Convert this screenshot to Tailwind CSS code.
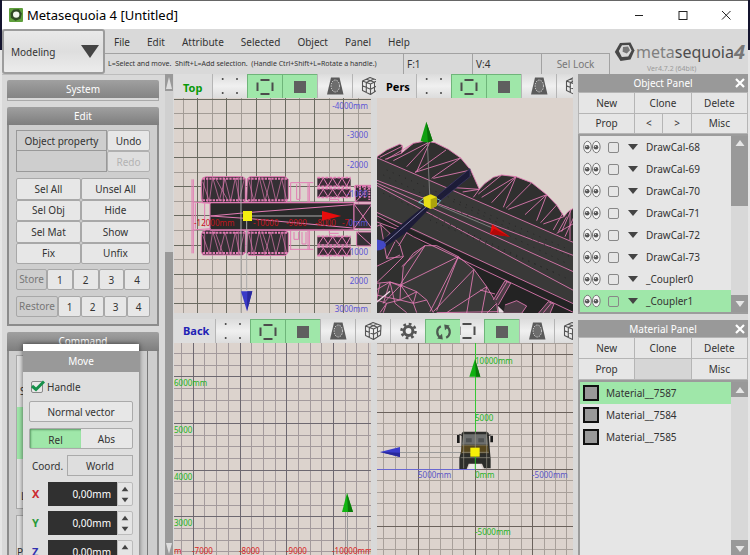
<!DOCTYPE html>
<html lang="en">
<head>
<meta charset="utf-8">
<title>Metasequoia 4 [Untitled]</title>
<script src="https://cdn.jsdelivr.net/npm/@tailwindcss/browser@4"></script>
</head>
<body class="h-screen overflow-hidden bg-[#d9d9d9] font-['Noto_Sans','Open_Sans',sans-serif] text-[10px] leading-[14px] text-[#333]">

<svg class="hidden" aria-hidden="true">
  <symbol id="i-dots" viewBox="0 0 35 24"><g fill="#444"><circle cx="9.7" cy="5" r="1"/><circle cx="24" cy="5" r="1"/><circle cx="9.7" cy="19" r="1"/><circle cx="24" cy="19" r="1"/></g></symbol>
  <symbol id="i-edges" viewBox="0 0 35 24"><path d="M12.5 5H21.5M12.5 19H21.5M9.5 7.5V16M24.5 7.5V16" stroke="#4c4c4c" stroke-width="2" fill="none"/></symbol>
  <symbol id="i-face" viewBox="0 0 35 24"><rect x="11" y="6" width="12" height="12" fill="#5f5f5f"/></symbol>
  <symbol id="i-trap" viewBox="0 0 35 24"><path d="M13 3.5H21.5L25.5 20.5H9Z" fill="#5b5b5b"/><ellipse cx="17.3" cy="12" rx="4.2" ry="6" fill="#6d6d6d" stroke="#e4e4e4" stroke-width="1" stroke-dasharray="1.3 1.2"/></symbol>
  <symbol id="i-cube" viewBox="0 0 35 24"><path d="M9.5 7L17 3.5L25 6.5L24.5 16L17.5 20.5L9.5 16.5ZM9.5 7L17.5 10L25 6.5M17.5 10V20.5M13.5 5.2L21.5 8.3V18M9.5 11.7L17.5 15.2L25 11.2M21 5L13.3 8.5V18.5" stroke="#555" stroke-width="1.1" fill="none" stroke-linejoin="round"/></symbol>
  <symbol id="i-gear" viewBox="0 0 35 24"><circle cx="17.5" cy="12" r="4.4" fill="none" stroke="#555" stroke-width="3"/><circle cx="17.5" cy="12" r="7" fill="none" stroke="#555" stroke-width="2.6" stroke-dasharray="2.75 2.75"/></symbol>
  <symbol id="i-turn" viewBox="0 0 35 24"><path d="M14.8 6.3A6.3 6.3 0 0 0 14.5 17.5M20.2 17.7A6.3 6.3 0 0 0 20.5 6.5" stroke="#4c5a50" stroke-width="2.2" fill="none"/><path d="M11.2 18.6L16.8 19.4L16 13.8ZM23.8 5.4L18.2 4.6L19 10.2Z" fill="#4c5a50"/></symbol>
  <symbol id="i-eyes" viewBox="0 0 18 14"><g fill="#f5f5f5" stroke="#777" stroke-width="1"><ellipse cx="4.5" cy="7" rx="3.8" ry="5.7"/><ellipse cx="13.3" cy="7" rx="3.8" ry="5.7"/></g><circle cx="4.2" cy="7.3" r="2.3" fill="#555"/><circle cx="13" cy="7.3" r="2.3" fill="#555"/><circle cx="3.7" cy="6.4" r=".7" fill="#ddd"/><circle cx="12.5" cy="6.4" r=".7" fill="#ddd"/></symbol>
  <symbol id="i-x" viewBox="0 0 12 12"><path d="M2 2L10 10M10 2L2 10" stroke="#fff" stroke-width="2.2"/></symbol>
  <symbol id="i-up" viewBox="0 0 10 8"><path d="M5 1L9.5 7H.5Z" fill="currentColor"/></symbol>
  <symbol id="i-down" viewBox="0 0 10 8"><path d="M5 7L9.5 1H.5Z" fill="currentColor"/></symbol>
</svg>

<div class="flex h-full bg-linear-to-b from-[#14142e] from-9% to-[#e6e6e6] to-9% px-[2px]">
<div class="flex min-w-0 flex-1 flex-col bg-[#d9d9d9]">

  <!-- Title bar -->
  <header class="flex h-[29px] shrink-0 items-center border-t border-[#666] bg-white pl-[7px] text-black">
    <svg class="mr-1 size-[14px]" viewBox="0 0 14 14"><rect width="14" height="14" rx="1" fill="#5f9f3c"/><path d="M4.5 1.5L10 1.3L12.8 5.5L11.5 10.8L6.5 12.8L1.8 9.8L1.5 5Z" fill="#2e4a24"/><circle cx="7.2" cy="6.6" r="3.2" fill="#f1f6ee"/></svg>
    <h1 class="flex-1 text-[13px] leading-[18px]">Metasequoia 4 [Untitled]</h1>
    <button class="flex w-[44px] justify-center" aria-label="Minimize"><svg class="size-[10px]" viewBox="0 0 10 10"><path d="M1 5.5H9" stroke="#222"/></svg></button>
    <button class="flex w-[43px] justify-center" aria-label="Maximize"><svg class="size-[10px]" viewBox="0 0 10 10"><rect x="1" y="1.5" width="8" height="8" fill="none" stroke="#222"/></svg></button>
    <button class="flex w-[44px] justify-center" aria-label="Close"><svg class="size-[10px]" viewBox="0 0 10 10"><path d="M1 1L9.5 9.5M9.5 1L1 9.5" stroke="#222"/></svg></button>
  </header>

  <!-- Menu and status -->
  <div class="flex h-[45px] shrink-0">
    <div class="relative w-[103px]">
      <select aria-label="Mode" class="h-full w-full appearance-none rounded-[3px] border-2 border-[#9c9c9c] bg-linear-to-b from-[#e9e9e9] via-[#dedede] to-[#ececec] pl-[7px] text-[10px]"><option>Modeling</option></select>
      <svg class="pointer-events-none absolute top-[16px] right-[6px] h-[13px] w-[18px]" viewBox="0 0 18 13"><path d="M0 0H18L9 13Z" fill="#444"/></svg>
    </div>
    <div class="flex min-w-0 flex-1 flex-col">
      <nav class="flex h-[24px] items-center gap-[17px] pt-px pl-[9px] text-[10px]">
        <a href="#">File</a><a href="#">Edit</a><a href="#">Attribute</a><a href="#">Selected</a><a href="#">Object</a><a href="#">Panel</a><a href="#">Help</a>
      </nav>
      <div class="flex flex-1 items-stretch border-t border-[#a2a2a2]">
        <p class="flex flex-1 items-center overflow-hidden pl-[3px] text-[7px] whitespace-pre">L=Select and move.  Shift+L=Add selection.  (Handle Ctrl+Shift+L=Rotate a handle.)</p>
        <p class="flex w-[69px] items-center border-l border-[#a2a2a2] pl-[3px]">F:1</p>
        <p class="flex w-[69px] items-center border-l border-[#a2a2a2] pl-[3px]">V:4</p>
        <button class="w-[69px] border-x border-[#a2a2a2] text-[#777]">Sel Lock</button>
      </div>
    </div>
    <div class="w-[138px] pt-[11px]">
      <div class="flex h-[23px] items-center pl-[4px]">
        <svg class="size-[21px] shrink-0" viewBox="0 0 21 21"><path d="M6 2L16.5 1.5L20.5 9.5L16.5 18.5L6.5 20L.8 11Z" fill="#484848"/><path d="M8 4.3L14.8 4L17.6 9.5L14.2 15.5L7.8 16L4.8 10Z" fill="#d9d9d9"/><path d="M9 6L14 5.6L16 9.2L12.8 12.6L8.6 10.8Z" fill="#777"/></svg>
        <p class="ml-px text-[16px] leading-[20px] text-[#4d4d4d]"><span class="text-[#808080]">meta</span>sequoia</p>
        <span class="text-[20px] leading-[20px] font-bold text-[#777] italic">4</span>
      </div>
      <p class="pl-[37px] text-[7px] leading-[12px] text-[#999]">Ver4.7.2 (64bit)</p>
    </div>
  </div>

  <main class="flex min-h-0 flex-1">

    <!-- Tool column -->
    <aside class="relative w-[163px] shrink-0 overflow-hidden border-t border-[#bdbdbd] pr-[6px] pl-[5px]">
      <h2 class="mt-[5px] h-[18px] rounded-t-[2px] bg-linear-to-b from-[#a0a0a0] to-[#848484] text-center leading-[18px] text-white">System</h2>
      <div class="h-[3px] border-x border-b border-[#aaa]"></div>
      <section class="mt-[6px]">
        <h2 class="h-[18px] rounded-t-[2px] bg-linear-to-b from-[#a0a0a0] to-[#7e7e7e] text-center leading-[18px] text-white">Edit</h2>
        <div class="h-[201px] border-2 border-t-0 border-[#8c8c8c] bg-[#cecece] px-[7px] pt-[5px]">
          <div class="grid h-[42px] grid-cols-[91px_1fr] grid-rows-2">
            <button class="border border-[#999]">Object property</button>
            <button class="rounded-[2px] border border-[#b0b0b0] bg-[#e7e7e7]">Undo</button>
            <div class="border border-t-0 border-[#999]"></div>
            <button class="rounded-[2px] border border-[#b0b0b0] bg-[#dfdfdf] text-[#b3b3b3]" disabled>Redo</button>
          </div>
          <div class="mt-[6px] grid h-[86px] grid-cols-[65px_1fr] grid-rows-4 *:rounded-[2px] *:border *:border-[#a8a8a8] *:bg-[#e7e7e7]">
            <button>Sel All</button><button>Unsel All</button>
            <button>Sel Obj</button><button>Hide</button>
            <button>Sel Mat</button><button>Show</button>
            <button>Fix</button><button>Unfix</button>
          </div>
          <div class="mt-[5px] grid h-[21px] grid-cols-[31px_repeat(4,1fr)] *:rounded-[2px] *:border *:border-[#a8a8a8]">
            <span class="text-center leading-[19px] text-[#777]">Store</span><button class="bg-[#e7e7e7]">1</button><button class="bg-[#e7e7e7]">2</button><button class="bg-[#e7e7e7]">3</button><button class="bg-[#e7e7e7]">4</button>
          </div>
          <div class="mt-[6px] grid h-[21px] grid-cols-[42px_repeat(4,1fr)] *:rounded-[2px] *:border *:border-[#a8a8a8]">
            <span class="text-center leading-[19px] text-[#777]">Restore</span><button class="bg-[#e7e7e7]">1</button><button class="bg-[#e7e7e7]">2</button><button class="bg-[#e7e7e7]">3</button><button class="bg-[#e7e7e7]">4</button>
          </div>
        </div>
      </section>
      <section class="mt-[6px]">
        <h2 class="h-[19px] rounded-t-[2px] bg-linear-to-b from-[#a0a0a0] to-[#7e7e7e] text-center leading-[19px] text-white">Command</h2>
        <div class="relative border-x-2 border-[#8c8c8c] bg-[#cecece] pt-[4px] pl-[7px]">
          <div class="h-[154px] w-[120px] border border-[#aaa] bg-[#e2e2e2]">
            <p class="mt-[28px] h-[23px] pl-[3px]">S</p>
            <p class="h-[52px] bg-[#9fe7a9]"></p>
            <p class="mt-[30px] pl-[4px]">L</p>
          </div>
          <div class="mt-[6px] h-[60px] w-[120px] border border-[#aaa] bg-[#e2e2e2]"><p class="mt-[29px]">Pr</p></div>
          <div class="absolute inset-y-0 right-[9px] w-px bg-[#777]"></div>
        </div>
      </section>

      <!-- Floating "Move" palette -->
      <form class="absolute top-[269px] left-[21px] w-[116px] border-t-[7px] border-white bg-[#dedede] shadow-[0_0_5px_rgba(0,0,0,.6)]">
        <h2 class="h-[21px] bg-[#999] text-center leading-[21px] text-white">Move</h2>
        <div class="px-[6px] pt-[8px]">
          <div class="relative flex h-[14px] items-center gap-[4px] pl-[2px]">
            <input id="handle" type="checkbox" checked class="size-[12px] appearance-none rounded-[2px] border border-[#888] bg-[#e8e8e8]">
            <svg class="pointer-events-none absolute top-0 left-[2px] h-[12px] w-[14px]" viewBox="0 0 14 12"><path d="M1 6L5 9.5L13 1.5" fill="none" stroke="#16904a" stroke-width="3"/></svg>
            <label for="handle">Handle</label>
          </div>
          <button type="button" class="mt-[7px] h-[21px] w-full rounded-[2px] border border-[#aaa] bg-[#e7e7e7]">Normal vector</button>
          <div class="mt-[6px] flex h-[21px] rounded-[2px] border border-[#aaa] bg-[#e7e7e7]">
            <button type="button" aria-pressed="true" class="flex-1 bg-[#9fe7a9] pt-[3px] shadow-[inset_1px_1px_2px_#5c9c66]">Rel</button><button type="button" class="flex-1">Abs</button>
          </div>
          <div class="mt-[6px] flex h-[21px] items-center justify-between pl-[3px]"><span>Coord.</span><button type="button" class="h-full w-[66px] border border-[#aaa]">World</button></div>
          <div id="axes" class="mt-[6px] flex flex-col gap-[5px]"></div>
        </div>
      </form>
    </aside>

    <div class="flex w-[8px] shrink-0 flex-col justify-between bg-linear-to-b from-[#d0d0d0] from-37% to-[#999] to-37%">
      <div class="flex h-[17px] items-center justify-center bg-[#999]"><svg class="h-[12px] w-[6px]" viewBox="0 0 6 12"><path d="M3 0L6 12H0Z" fill="#ddd"/></svg></div>
      <svg class="mx-px mb-[1px] h-[11px] w-[6px]" viewBox="0 0 6 11"><path d="M0 0H6L3 11Z" fill="#ddd"/></svg>
    </div>

    <!-- Viewports -->
    <section class="ml-px grid min-w-0 flex-1 grid-cols-[minmax(0,203fr)_minmax(0,201fr)] grid-rows-[24px_minmax(0,215fr)_30px_minmax(0,212fr)] overflow-hidden">
      <div class="flex overflow-hidden bg-[#dedede] pr-px">
        <h3 class="w-[38px] shrink-0 pl-[9px] text-[11px] leading-[27px] font-bold text-[#0a9a0a]">Top</h3>
        <div data-tools="dots edges face trap cube" class="flex overflow-hidden"></div>
      </div>
      <div class="mr-[5px] flex overflow-hidden bg-[#dedede]">
        <h3 class="w-[39px] shrink-0 pl-[9px] text-[11px] leading-[26px] font-bold text-black">Pers</h3>
        <div data-tools="dots edges face trap cube" class="flex overflow-hidden"></div>
      </div>

      <svg class="h-full w-[calc(100%-6px)] bg-[#dcd3cd]" viewBox="0 0 197 215" preserveAspectRatio="xMinYMin slice" aria-label="Top view">
        <g data-grid="-5.6 1.1 29.2 2 #a39c96 #6a6a60"></g>
        <g transform="translate(-4 -28) scale(.33333)" stroke="#e27bb4" stroke-width="3" stroke-linejoin="round">
          <g fill="#343034">
            <path d="M98 324L108 320H218L226 326V394L218 398H98L94 385V335ZM232 326L240 320H345L355 328V385L348 397H236L230 388ZM98 484L108 480H218L226 486V548L218 555H98L94 545V495ZM232 486L240 480H345L355 488V545L348 556H236L230 548Z"/>
            <path d="M120 398H552V480H120Z" fill="#292929"/>
            <path d="M552 402H606V476H552ZM556 346H606V396H556ZM560 486H606V528H560Z"/>
          </g>
          <path d="M66 328V550M70 328V550M68 396L122 400M68 480L122 476M76 400V476M104 400V470M362 338H430M362 538H430M362 338V396M362 482V540M414 340V396M414 482V538M418 340V396M418 482V538M380 342V388H390V342M372 486V508H386V486M396 486V522H408V486M478 388H506V398M478 480V490H506M552 402L606 476M552 476L606 402M560 486L606 528M556 396L606 346" fill="none"/>
          <path d="M98 335L118 394L128 322L148 392L165 326L182 394L196 324L208 390L222 330M104 322L98 390M112 322V396M135 322L175 394M160 322V396M205 322V396M236 330L252 394L268 322L285 394L302 324L318 394L335 326L350 390M244 322V396M276 322L300 396M345 322V396M98 495L118 552L128 484L148 552L165 486L182 554L196 486L208 550L222 490M104 484V552M135 484L160 554M205 484V554M236 490L252 554L268 484L285 554L302 486L318 554L335 486L350 548M244 484V554M276 484L300 554M345 484V554" fill="none" stroke-width="2"/>
          <path d="M98 326H224M234 326H352M98 391H224M234 391H352M98 488H224M234 488H352M98 549H224M234 549H352" stroke-width="6" stroke-dasharray="7 3" fill="none"/>
          <path d="M442 336H542M442 369H542M442 512H542M442 544H542" stroke="#3a2c36" stroke-width="24"/>
          <path d="M442 323H542M442 349H542M442 356H542M442 382H542M442 499H542M442 525H542M442 531H542M442 557H542" stroke-width="5" stroke-dasharray="9 3"/>
          <path d="M446 348L460 324L474 348L488 324L502 348L516 324L530 348L542 324M446 380L460 358L474 380L488 358L502 380L516 358L530 380L542 358M446 522L460 500L474 522L488 500L502 522L516 500L530 522L542 500M446 556L460 534L474 556L488 534L502 556L516 534L530 556L542 534" fill="none" stroke-width="3"/>
          <path d="M552 350H606M570 346V384M584 346V384M598 346V390" stroke-width="6" stroke-dasharray="5 3"/>
          <path d="M122 438L230 428L548 404M122 438L240 446L548 474M122 398H552M122 480H552" fill="none"/>
          <path d="M230 438V660M213 320V728M230 438H460" stroke="#aaa"/>
          <path d="M456 423L514 438L456 452Z" fill="#e80c0c" stroke="none"/><path d="M213 664H247L231 724Z" fill="#3a3ac8" stroke="none"/><path d="M232 664H247L231 724Z" fill="#29299c" stroke="none"/>
        </g>
        <g font-size="8" fill="#5b55d6" text-anchor="end"><text x="194" y="11">-4000mm</text><text x="194" y="40">-3000</text><text x="194" y="70">-2000</text><text x="194" y="99">-1000</text><text x="194" y="128">0mm</text><text x="194" y="157">1000</text><text x="194" y="186">2000</text><text x="194" y="214">3000mm</text></g>
        <g font-size="8" fill="#c3141c"><text x="20" y="128">-12000mm</text><text x="79" y="128">-10000</text><text x="112" y="128">-9000</text><text x="141" y="128">-8000</text><text x="168" y="128">-7</text></g>
        <rect x="69" y="113" width="9" height="10" fill="#f4ee10"/>
      </svg>

      <svg class="h-full w-[calc(100%-5px)] bg-[#dcd3cd]" viewBox="0 0 196 215" preserveAspectRatio="xMinYMin slice" aria-label="Perspective view">
        <g transform="translate(-7 -28) scale(.33333)" stroke="#e27bb4" stroke-width="2.6" stroke-linejoin="round">
          <path d="M18 262L50 240L90 222L98 228L94 250L130 220L165 213L195 218L235 238L272 264L302 300L328 358L345 340L370 322L395 315L438 320L485 338L530 374L560 405L582 440L594 425L612 414V732H18Z" fill="#30302f"/>
          <path d="M18 262L612 518V702L18 445Z" fill="#393938" stroke="none"/>
          <path d="M18 432L612 700V732H400L350 650L100 480L60 500Z" fill="#232323" stroke="none"/>
          <path d="M95 650L100 590L130 550L165 527L200 527L265 560L312 598L350 650L380 700L384 732H18V640L60 636Z" fill="#393938"/>
          <path d="M18 470L32 464L60 490L90 525L100 560L60 600L18 640Z" fill="#303030"/>
          <path d="M384 708L405 728H386Z" fill="#e8d8e0" stroke="none"/>
          <path d="M18 262L612 518M18 330L612 557M18 338L612 606M18 345L612 662M18 426L612 702M18 436L100 478M18 455L110 488L86 528M110 488L130 500L612 728" fill="none"/>
          <path d="M180 215L70 272M180 215L110 290M180 215L140 305M228 240L135 307M272 264L135 307M272 264L185 325M302 300L190 325M302 315L240 345M328 358L240 352M328 358L278 366M328 358L310 382M130 220L50 268M94 250L45 268M98 228L30 262" fill="none"/>
          <path d="M438 320L335 382M438 320L365 398M438 320L400 412M485 338L408 415M530 374L415 418M530 374L465 434M530 374L500 452M560 405L512 458M582 440L520 462M578 430L550 480M395 315L325 372M590 440L565 485M604 418L575 485M612 440L585 500M600 425L600 510M612 460L560 490" fill="none"/>
          <path d="M165 527L90 645M165 527L95 590M265 560L92 645M265 560L180 725M265 560L200 722M312 598L190 725M312 598L290 730M350 650L230 728M350 650L335 730M380 700L350 730M384 725L200 728M32 464L50 565M75 515L50 565M100 560L50 565M60 490L18 540M18 590L90 555" fill="none"/>
          <path d="M18 660L60 636L92 645L140 665L170 690L190 728M40 728L50 700L90 690L130 700L140 728M60 636L40 700L92 645L90 690L140 665L130 700L170 690M20 690L50 700L30 728M18 675L90 690M60 636L75 700L110 728M30 640L20 690M92 645L130 700" fill="none"/>
          <path d="M370 690L405 632L422 640L385 705M378 690L412 634M405 705L440 692L470 708L455 730H400M505 730L535 695L552 702L540 730M520 728L545 698M330 660L375 672" fill="#4a3c44"/>
          <path d="M300 296V320L205 397L198 380L240 345Z" fill="#1d1c38" stroke="#3a3560"/>
          <path d="M172 400L38 510L46 530L108 488L182 412Z" fill="#1d1c38" stroke="none"/><path d="M45 520L178 402" stroke="#8a88b0"/>
          <path d="M18 698L60 664" stroke="#f2d5e4" stroke-width="4"/>
          <g fill="none" stroke="#252525" stroke-width="3" stroke-dasharray="3 17"><path d="M50 300L600 540M40 370L600 630M180 450L560 610M40 315L590 580M250 395L600 560"/></g>
          <path d="M172 215L180 395L370 475" stroke="#888" fill="none"/>
          <path d="M146 397L165 383H195L212 392L200 405H165Z" fill="none" stroke="#7fd3cf"/>
          <path d="M169 155L188 212Q170 222 152 212Z" fill="#0f9f0f" stroke="none"/><path d="M169 155L188 212L174 218Z" fill="#087008" stroke="none"/>
          <path d="M366 463L420 500L360 492Z" fill="#e60e0e" stroke="none"/><path d="M360 492L420 500L372 476Z" fill="#b50808" stroke="none"/>
          <path d="M18 508Q45 510 48 525Q46 540 18 542Z" fill="#4348c6" stroke="none"/>
          <path d="M160 382L182 373L201 381V407L182 417L162 408Z" fill="#e8df17" stroke="none"/><path d="M182 388L201 381V407L182 417Z" fill="#aca30d" stroke="none"/>
        </g>
      </svg>

      <div class="relative z-10 flex items-end self-end">
        <h3 class="w-[41px] shrink-0 bg-[#dedede] pl-[9px] text-[11px] leading-[24px] font-bold text-[#2222b5]">Back</h3>
        <div data-tools="dots edges face trap cube gear turn" class="flex shrink-0"></div>
      </div>
      <div class="mr-[5px] flex self-end overflow-hidden pl-[72px]">
        <div data-tools="edges face trap cube" class="flex overflow-hidden"></div>
      </div>

      <svg class="h-full w-[calc(100%-6px)] bg-[#dcd3cd]" viewBox="0 0 197 212" preserveAspectRatio="xMinYMin slice" aria-label="Back view">
        <g data-grid="-27.4 -13 46.7 4 #a39a9c #6d6870"></g>
        <path d="M173.5 165V212" stroke="#999"/><path d="M173 150L179 169H168Z" fill="#12b512"/><path d="M173 150L179 169H174Z" fill="#0a7a0a"/>
        <g font-size="8" fill="#1db31d"><text x="0" y="43">6000mm</text><text x="0" y="90">5000</text><text x="0" y="137">4000</text><text x="0" y="183">3000</text></g>
        <g font-size="8" fill="#d81e24"><text x="0" y="211">m</text><text x="18" y="211">-7000</text><text x="65" y="211">-8000</text><text x="112" y="211">-9000</text><text x="158" y="211">-10000mm</text></g>
      </svg>

      <svg class="h-full w-[calc(100%-5px)] bg-[#dcd3cd]" viewBox="0 0 196 212" preserveAspectRatio="xMinYMin slice" aria-label="Front view">
        <g data-grid="-16.3 -45.6 57.3 5 #a8a09a #6b625c"></g>
        <path d="M98.5 0V126" stroke="#35c835"/><path d="M0 126.5H98" stroke="#6a68d0"/>
        <path d="M20 109.5H98" stroke="#999"/>
        <g transform="translate(-7 -28) scale(.33333)">
          <path d="M275 354L280 350H350L356 354L360 410L362 432V460H342L336 446H296L290 462H268V430L274 405Z" fill="#2c2d2a"/>
          <path d="M280 358H350L354 388H276Z" fill="#6d6f6e"/><path d="M276 390H354L357 415H273Z" fill="#57471e"/><path d="M288 370H305V382H288ZM325 370H342V382H325Z" fill="#4f5252"/>
          <path d="M261 360H269V384H261ZM361 362H369V382H361Z" fill="#1b1b1b"/><path d="M268 358L278 362M352 362L362 360" stroke="#222" stroke-width="3"/>
          <path d="M276 390H354M272 428H360M281 350V460M350 350V460M316 350V400M276 412H356" stroke="#98958a" stroke-width="2"/>
          <path d="M294 462L300 447H330L338 462Z" fill="#ece9e6"/><path d="M316 425V463" stroke="#25b825" stroke-width="3"/>
          <path d="M315 132L331 185H298Z" fill="#11b011"/><path d="M315 132L331 185H318Z" fill="#0a780a"/>
          <path d="M30 411L90 396V426Z" fill="#3a3ccb"/><path d="M30 411L90 413V426Z" fill="#28289a"/>
          <path d="M301 398H329V425H301Z" fill="#f6ef08"/>
        </g>
        <g font-size="8" fill="#1db31d"><text x="98" y="21">10000mm</text><text x="98" y="78">5000</text><text x="98" y="135">0mm</text><text x="98" y="192">-5000mm</text></g>
        <g font-size="8" fill="#5b55c6"><text x="41" y="135">5000mm</text><text x="155" y="135">-5000mm</text></g>
      </svg>
    </section>

    <!-- Panels -->
    <aside class="flex w-[170px] shrink-0 flex-col gap-[6px]">
      <section class="flex h-[240px] shrink-0 flex-col">
        <div class="flex h-[18px] shrink-0 items-center bg-[#999] pr-[2px] pl-[14px] text-white"><h2 class="flex-1 text-center">Object Panel</h2><button aria-label="Close Object Panel"><svg class="size-[12px]"><use href="#i-x"/></svg></button></div>
        <div class="grid h-[42px] shrink-0 grid-cols-6 grid-rows-2 gap-px bg-[#b5b5b5] p-px *:bg-[#e6e6e6]">
          <button class="col-span-2">New</button><button class="col-span-2">Clone</button><button class="col-span-2">Delete</button>
          <button class="col-span-2">Prop</button><button>&lt;</button><button>&gt;</button><button class="col-span-2">Misc</button>
        </div>
        <div class="flex min-h-0 flex-1 border-2 border-r-0 border-[#9c9c9c] bg-[#e6e6e6]">
          <ul id="objects" class="flex-1"></ul>
          <div class="flex w-[17px] flex-col justify-between bg-[#d8d8d8]">
            <div class="flex h-[70px] justify-center bg-[#999] pt-[3px] text-[#e6e6e6]"><svg class="h-[8px] w-[10px]"><use href="#i-up"/></svg></div>
            <div class="flex h-[17px] items-center justify-center bg-[#999] text-[#e6e6e6]"><svg class="h-[8px] w-[10px]"><use href="#i-down"/></svg></div>
          </div>
        </div>
      </section>
      <section class="flex min-h-0 flex-1 flex-col">
        <div class="flex h-[17px] shrink-0 items-center bg-[#999] pr-[2px] pl-[14px] text-white"><h2 class="flex-1 text-center">Material Panel</h2><button aria-label="Close Material Panel"><svg class="size-[12px]"><use href="#i-x"/></svg></button></div>
        <div class="grid h-[43px] shrink-0 grid-cols-3 grid-rows-2 gap-px bg-[#b5b5b5] p-px">
          <button class="bg-[#e6e6e6]">New</button><button class="bg-[#e6e6e6]">Clone</button><button class="bg-[#e6e6e6]">Delete</button>
          <button class="bg-[#e6e6e6]">Prop</button><span class="bg-[#d6d6d6]"></span><button class="bg-[#e6e6e6]">Misc</button>
        </div>
        <div class="flex min-h-0 flex-1 border-t-2 border-l-2 border-[#9c9c9c] bg-[#e6e6e6]">
          <ul class="flex-1 *:flex *:h-[22px] *:items-center *:gap-[7px] *:pl-[3px]">
            <li class="bg-[#9fe7a9]"><span class="size-[16px] border-2 border-[#111] bg-[#999]"></span>Material__7587</li>
            <li><span class="size-[16px] border-2 border-[#111] bg-[#999]"></span>Material__7584</li>
            <li><span class="size-[16px] border-2 border-[#111] bg-[#999]"></span>Material__7585</li>
          </ul>
          <div class="flex w-[17px] flex-col justify-between bg-[#d8d8d8]">
            <div class="flex h-[15px] items-center justify-center bg-[#999] text-[#e6e6e6]"><svg class="h-[8px] w-[10px]"><use href="#i-up"/></svg></div>
            <div class="flex h-[15px] items-center justify-center bg-[#999] pt-[3px] text-[#e6e6e6]"><svg class="h-[8px] w-[10px]"><use href="#i-down"/></svg></div>
          </div>
        </div>
      </section>
    </aside>
  </main>
</div>
</div>

<script>
  // Grid lines: x origin, y origin, major step, subdivisions, minor colour, major colour
  document.querySelectorAll('[data-grid]').forEach(g => {
    const [x0, y0, step, div, minor, major] = g.dataset.grid.split(' ');
    let a = '', b = '';
    for (let i = 0; i < 40; i++) {
      const x = Math.floor(+x0 + i * step / div) + .5, y = Math.floor(+y0 + i * step / div) + .5;
      const d = (x < 240 ? `M${x} 0V240` : '') + (y < 240 ? `M0 ${y}H240` : '');
      if (i % div) a += d; else b += d;
    }
    g.innerHTML = `<path d="${a}" stroke="${minor}"/><path d="${b}" stroke="${major}"/>`;
  });

  const names = {dots: 'Vertices', edges: 'Edges', face: 'Faces', trap: 'Texture', cube: 'Wire box', gear: 'Settings', turn: 'Rotate'};
  const on = {edges: 1, face: 1, turn: 1};
  document.querySelectorAll('[data-tools]').forEach(bar => {
    const list = bar.dataset.tools.split(' ');
    bar.innerHTML = list.map((t, i) => {
      const lit = on[t] && !(t === 'edges' && i === 0);
      return `<button aria-label="${names[t]}" aria-pressed="${!!lit}" class="h-[24px] w-[35px] shrink-0 ${lit
        ? 'border-t border-l border-[#6fb57a] bg-[#9fe7a9]'
        : 'border-l border-[#b5b5b5] bg-linear-to-b from-[#dcdcdc] via-[#f0f0f0] to-[#dcdcdc]'}"><svg class="h-[24px] w-[35px]"><use href="#i-${t}"/></svg></button>`;
    }).join('');
  });

  document.getElementById('objects').innerHTML =
    ['DrawCal-68', 'DrawCal-69', 'DrawCal-70', 'DrawCal-71', 'DrawCal-72', 'DrawCal-73', '_Coupler0', '_Coupler1'].map((n, i) =>
      `<li class="flex h-[22px] items-center pl-[3px] ${i === 7 ? 'bg-[#9fe7a9]' : ''}">
        <button aria-label="Show ${n}"><svg class="h-[14px] w-[18px]"><use href="#i-eyes"/></svg></button>
        <input type="checkbox" aria-label="Lock ${n}" class="ml-[7px] size-[11px] appearance-none rounded-[2px] border border-[#888]">
        <svg class="ml-[9px] h-[6px] w-[10px]" viewBox="0 0 10 6"><path d="M0 0H10L5 6Z" fill="#444"/></svg>
        <span class="ml-[8px]">${n}</span></li>`).join('');

  document.getElementById('axes').innerHTML =
    [['X', 'text-[#cc2a30]'], ['Y', 'text-[#2a9a3a]'], ['Z', 'text-[#3030b0]']].map(([n, c]) =>
      `<div class="flex h-[24px] items-center">
        <label for="axis${n}" class="w-[19px] pl-[3px] text-[11px] font-bold ${c}">${n}</label>
        <input id="axis${n}" value="0,00mm" class="h-full w-[69px] min-w-0 bg-[#303030] pr-[6px] text-right text-[10px] text-white">
        <div class="flex h-full flex-1 flex-col rounded-r-[2px] border border-[#bbb] bg-[#e4e4e4] text-[#444]">
          <button type="button" aria-label="${n} up" class="flex flex-1 items-center justify-center"><svg class="h-[6px] w-[8px]"><use href="#i-up"/></svg></button>
          <button type="button" aria-label="${n} down" class="flex flex-1 items-center justify-center"><svg class="h-[6px] w-[8px]"><use href="#i-down"/></svg></button>
        </div></div>`).join('');
</script>
</body>
</html>
